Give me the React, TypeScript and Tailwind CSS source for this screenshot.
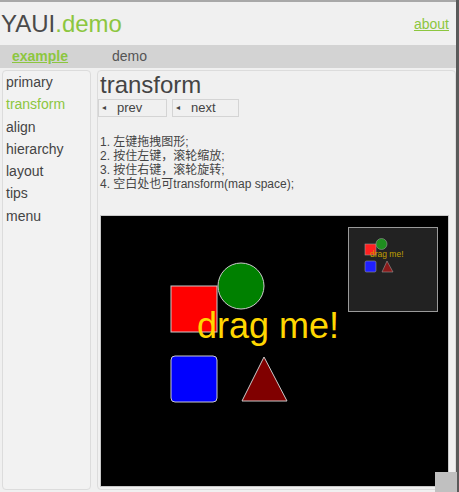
import React from "react"

const menu = ["primary", "transform", "align", "hierarchy", "layout", "tips", "menu"]

const steps = [
  "1. 左键拖拽图形;",
  "2. 按住左键，滚轮缩放;",
  "3. 按住右键，滚轮旋转;",
  "4. 空白处也可transform(map space);",
]

function Stage() {
  return (
    <div className="border border-[#c8c8c8] bg-black h-[272px] w-[349px]">
      <svg width="347" height="270" viewBox="0 0 347 270">
        <rect x="70" y="70" width="46" height="46" fill="#ff0000" stroke="#cccccc" strokeWidth="1" />
        <circle cx="140" cy="70" r="23" fill="#008000" stroke="#cccccc" strokeWidth="1" />
        <rect x="70" y="140" width="46" height="46" rx="4" fill="#0000ff" stroke="#cccccc" strokeWidth="1" />
        <polygon points="163,141 141,185 186,185" fill="#800000" stroke="#cccccc" strokeWidth="1" />
        <text x="96" y="122" fill="#ffd700" fontSize="36" fontFamily="'Liberation Sans', Arial, sans-serif">
          drag me!
        </text>

        {/* minimap */}
        <rect x="247.5" y="11.5" width="89" height="84" fill="#222222" stroke="#9a9a9a" strokeWidth="1" />
        <rect x="264" y="28" width="11" height="11" fill="#ff2020" stroke="#999" strokeWidth="0.6" />
        <circle cx="280.5" cy="28" r="5.5" fill="#1f8f1f" stroke="#999" strokeWidth="0.6" />
        <rect x="264" y="45" width="11" height="11" rx="1.5" fill="#2020ff" stroke="#999" strokeWidth="0.6" />
        <polygon points="286,45 281,56 292,56" fill="#8b1a1a" stroke="#999" strokeWidth="0.6" />
        <text x="269" y="41" fill="#c0a000" fontSize="8.5" fontFamily="'Liberation Sans', Arial, sans-serif">
          drag me!
        </text>
      </svg>
    </div>
  )
}

export default function App() {
  return (
    <div
      className="relative h-[492px] w-[459px] overflow-hidden bg-[#f0f0f0] text-[#444]"
      style={{ fontFamily: "'Liberation Sans', Arial, 'Noto Sans CJK SC', sans-serif" }}
    >
      <div className="flex h-full w-[456px] flex-col">
        {/* header */}
        <header className="flex h-[45px] items-center justify-between border-t-2 border-[#a8a8a8] pl-[1px] pr-[7px]">
          <div className="text-[24px] leading-none">
            <span className="text-[#4a4a4a]">YAUI</span>
            <span className="text-[#8cc63f]">.demo</span>
          </div>
          <a className="mt-[2px] text-[14px] text-[#8cc63f] underline">about</a>
        </header>

        {/* tabs */}
        <nav className="flex h-[23px] items-center gap-[44px] bg-[#d3d3d3] pl-[12px] text-[14px]">
          <a className="font-bold text-[#8cc63f] underline">example</a>
          <span className="text-[#555]">demo</span>
        </nav>

        {/* body */}
        <div className="flex flex-1 gap-[6px] pb-[2px] pl-[2px] pt-[2px]">
          <aside className="w-[89px] rounded-[4px] border border-[#dcdcdc] bg-[#f2f2f2] pl-[3px]">
            {menu.map((m) => (
              <div
                key={m}
                className={"text-[14px] leading-[22.3px] " + (m === "transform" ? "text-[#8cc63f]" : "text-[#444]")}
              >
                {m}
              </div>
            ))}
          </aside>

          <main className="flex-1 rounded-[4px] border border-[#dcdcdc] bg-[#f0f0f0] pt-[1px]">
            <h1 className="pl-[2px] text-[24px] leading-[26px] text-[#444]">transform</h1>
            <div className="mt-[1px] flex gap-[5px]">
              <button className="flex h-[18px] w-[69px] items-center border border-[#d4d4d4] bg-[#f0f0f0] pl-[3px] text-[13px] text-[#444]">
                <span className="text-[8px]">◂</span>
                <span className="ml-[11px]">prev</span>
              </button>
              <button className="flex h-[18px] w-[67px] items-center border border-[#d4d4d4] bg-[#f0f0f0] pl-[3px] text-[13px] text-[#444]">
                <span className="text-[8px]">◂</span>
                <span className="ml-[11px]">next</span>
              </button>
            </div>
            <div className="mt-[18px] pl-[2px] text-[12px] leading-[14px] text-[#444]">
              {steps.map((s) => (
                <div key={s}>{s}</div>
              ))}
            </div>
            <div className="mt-[24px] pl-[2px]">
              <Stage />
            </div>
          </main>
        </div>
      </div>

      {/* window edge & corner */}
      <div className="absolute right-0 top-0 h-full w-[3px] bg-[#5a5a5a]" />
      <div className="absolute bottom-0 right-[2px] h-[20px] w-[22px] bg-[#c0c0c0]" />
    </div>
  )
}
